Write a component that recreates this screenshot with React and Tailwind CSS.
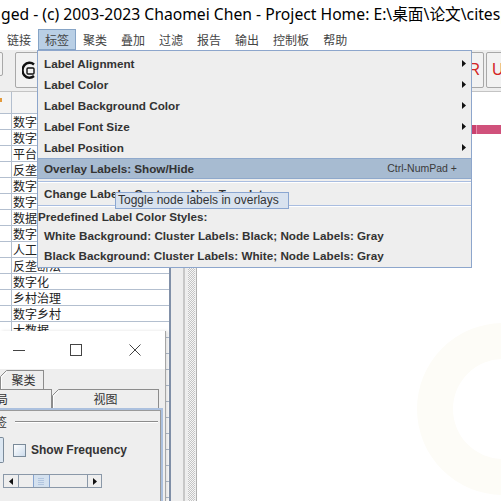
import React from 'react';

const MENUS = ['链接', '标签', '聚类', '叠加', '过滤', '报告', '输出', '控制板', '帮助'];

const SUBMENUS = ['Label Alignment', 'Label Color', 'Label Background Color', 'Label Font Size', 'Label Position'];

const ROWS = [
  '数字经济', '数字治理', '平台经济', '反垄断', '数字技术', '数字金融', '数据要素', '数字贸易',
  '人工智能', '反垄断法', '数字化', '乡村治理', '数字乡村', '大数据', '数字政府', '互联网',
  '区块链', '共同富裕', '高质量发展', '新质生产力', '数字素养', '电子商务', '算法', '隐私保护', '数据安全'
];

function Arrow({ left }) {
  return (
    <svg width="4" height="7" className="shrink-0">
      <path d={left ? 'M4 0 L0 3.5 L4 7Z' : 'M0 0 L4 3.5 L0 7Z'} fill="#111" />
    </svg>
  );
}

function Separator({ h }) {
  return (
    <div className={`${h} flex flex-col justify-center`}>
      <div className="border-t border-[#a9bde0]" />
      <div className="border-t border-white" />
    </div>
  );
}

function Tab({ width, children }) {
  return (
    <div className={`flex h-full ${width}`}>
      <svg width="7" height="19" className="shrink-0">
        <path d="M0.5 19 V6.5 L6.5 0.5 H7" stroke="#8c8c8c" fill="none" />
        <path d="M1.5 19 V7 L7 1.5" stroke="#ffffff" fill="none" />
      </svg>
      <div className="flex-1 border-t border-r border-[#8c8c8c] flex items-center justify-center overflow-hidden">
        {children}
      </div>
    </div>
  );
}

export default function App() {
  return (
    <div className="relative w-[501px] h-[501px] overflow-hidden bg-white font-['Liberation_Sans','Noto_Sans_CJK_SC',sans-serif] text-[#333]">
      {/* window title */}
      <div className="h-[29px] flex items-center whitespace-nowrap text-[15.7px] text-black font-['Noto_Sans','Noto_Sans_CJK_SC',sans-serif] pl-[1px]">
        ged - (c) 2003-2023 Chaomei Chen - Project Home: E:\桌面\论文\citespace
      </div>

      {/* menu bar */}
      <div className="h-[21px] flex bg-white text-[12px] font-['Noto_Sans_CJK_SC',sans-serif] text-[#444]">
        {MENUS.map((m, i) => (
          <div
            key={m}
            className={`flex items-center px-[6px] border ${
              i === 1 ? 'bg-[#b9cfe5] border-[#86a4c6]' : 'border-transparent'
            }`}
          >
            {m}
          </div>
        ))}
      </div>

      {/* toolbar */}
      <div className="h-[42px] flex items-start pt-[2px] bg-[#eeeeee] border-b border-[#c4c4c4] overflow-hidden">
        <div className="-ml-[21px] w-[24px] h-[24px] border border-[#a8a8a8] rounded-[2px] bg-[#f2f2f2]" />
        <div className="ml-[12px] w-[34px] h-[36px] border border-[#a8a8a8] rounded-[2px] bg-[#f2f2f2] flex items-center pl-[6px]">
          <svg width="16" height="18" viewBox="0 0 16 18">
            <path d="M12 3.5 A7 7.5 0 1 0 12 15" stroke="#111" strokeWidth="2.4" fill="none" />
            <rect x="5" y="7" width="7" height="6" rx="1" stroke="#111" strokeWidth="1.4" fill="none" />
          </svg>
        </div>
        <div className="flex-1" />
        <div className="w-[24px] h-[36px] border border-[#a8a8a8] rounded-[2px] bg-[#f2f2f2] flex items-center justify-end pr-[3px] text-[16px] text-[#d42525] mr-[2px]">
          R
        </div>
        <div className="w-[24px] h-[36px] border border-[#a8a8a8] rounded-[2px] bg-[#f2f2f2] flex items-center pl-[5px] text-[16px] text-[#d42525] -mr-[9px] shrink-0">
          U
        </div>
      </div>

      {/* body */}
      <div className="flex h-[409px]">
        {/* table */}
        <div className="w-[171px] border-r-2 border-[#8190a8] bg-white flex flex-col overflow-hidden">
          <div className="h-[22px] flex border-b border-[#b3bfcf] bg-[#f4f4f4] shrink-0">
            <div className="w-[12px] border-r border-[#b3bfcf] pt-[6px]">
              <div className="w-[2px] h-[4px] bg-[#e39a3c]" />
            </div>
            <div className="flex-1" />
          </div>
          {ROWS.map((r) => (
            <div key={r} className="h-[16px] flex border-b border-[#b3bfcf] shrink-0">
              <div className="w-[12px] border-r border-[#b3bfcf]" />
              <div className="flex-1 pl-[1px] text-[12px] leading-[15px] text-[#222] font-['Noto_Sans_CJK_SC',sans-serif] whitespace-nowrap">
                {r}
              </div>
            </div>
          ))}
        </div>
        <div className="w-[12px] bg-[#eeeeee]" />
        {/* splitter */}
        <div className="w-[14px] flex bg-[#eeeeee]">
          <div className="w-[2px] bg-[#c8c8c8]" />
          <div className="w-[3px]" />
          <div className="w-[7px] bg-[conic-gradient(#c4c4c4_25%,#f6f6f6_0_50%,#c4c4c4_0_75%,#f6f6f6_0)] bg-[length:2px_2px]" />
          <div className="w-[1px]" />
          <div className="w-[1px] bg-[#b0b0b0]" />
        </div>
        {/* canvas */}
        <div className="relative flex-1 bg-white">
          <div className="absolute left-[275px] top-[33px] w-[40px] h-[9px] flex">
            <div className="w-[4px] bg-[#c9426f]" />
            <div className="w-[1px] bg-[#e88aab]" />
            <div className="flex-1 bg-[#d0517b]" />
          </div>
          <svg className="absolute left-[218px] top-[229px]" width="100" height="180">
            <path
              d="M88 2 A86 86 0 1 0 88 174 A86 86 0 1 0 88 2 Z M88 38 A50 50 0 1 1 88 138 A50 50 0 1 1 88 38 Z"
              fill="#fdfcf7"
              fillRule="evenodd"
            />
          </svg>
        </div>
      </div>

      {/* dropdown menu */}
      <div className="absolute left-[37px] top-[50px] w-[435px] bg-[#eeeeee] border border-[#8da6cc] pt-[2px] pb-[1px] text-[11.7px] font-bold text-[#333]">
        {SUBMENUS.map((s) => (
          <div key={s} className="h-[21px] flex items-center pl-[6px] pr-[5px]">
            <span>{s}</span>
            <span className="ml-auto">
              <Arrow />
            </span>
          </div>
        ))}
        <div className="h-[21px] flex items-center pl-[6px] pr-[14px] bg-[#a7bbd1] border-y border-[#8fa9cc]">
          <span>Overlay Labels: Show/Hide</span>
          <span className="ml-auto text-[10.5px] font-normal text-[#3a3a3a]">Ctrl-NumPad +</span>
        </div>
        <Separator h="h-[5px]" />
        <div className="h-[20px] flex items-center pl-[6px] whitespace-nowrap">Change Labels: Custom... Nice Template</div>
        <Separator h="h-[3px]" />
        <div className="h-[19px] flex items-center">Predefined Label Color Styles:</div>
        <div className="h-[20px] flex items-center pl-[6px]">White Background: Cluster Labels: Black; Node Labels: Gray</div>
        <div className="h-[20px] flex items-center pl-[6px]">Black Background: Cluster Labels: White; Node Labels: Gray</div>
      </div>

      {/* tooltip */}
      <div className="absolute left-[115px] top-[192px] w-[174px] h-[17px] border border-[#8aa6d1] bg-[#d8e2ef] pl-[2px] text-[12px] leading-[15px] text-[#333] whitespace-nowrap">
        Toggle node labels in overlays
      </div>

      {/* floating dialog */}
      <div className="absolute left-0 top-[331px] w-[166px] h-[170px] border-r border-[#a6a6a6] shadow-[2px_0_3px_rgba(0,0,0,0.12)] flex flex-col">
        <div className="h-[38px] bg-white flex items-center shrink-0">
          <svg width="12" height="12" className="ml-[13px]">
            <path d="M0 6.5 H12" stroke="#444" strokeWidth="1" />
          </svg>
          <svg width="12" height="12" className="ml-[45px]">
            <rect x="0.5" y="0.5" width="11" height="11" stroke="#444" strokeWidth="1" fill="none" />
          </svg>
          <svg width="12" height="12" className="ml-[47px]">
            <path d="M0.5 0.5 L11.5 11.5 M11.5 0.5 L0.5 11.5" stroke="#444" strokeWidth="1" />
          </svg>
        </div>
        <div className="flex-1 bg-[#eeeeee] flex flex-col text-[12px] font-['Noto_Sans_CJK_SC',sans-serif] text-[#333]">
          <div className="h-[20px] pt-[1px] flex">
            <Tab width="w-[44px]">
              <span className="-ml-[3px]">聚类</span>
            </Tab>
          </div>
          <div className="h-[19px] flex">
            <div className="w-[52px] h-full border-t border-r border-[#8c8c8c] flex items-center overflow-hidden">
              <span className="-ml-[16px] whitespace-nowrap">布局</span>
            </div>
            <Tab width="w-[107px]">
              <span className="-ml-[6px]">视图</span>
            </Tab>
          </div>
          <div className="w-[163px] flex-1 border-t-2 border-r-2 border-[#abc0de]">
            <div className="h-full border-t border-r border-[#9a9a9a] flex flex-col">
              <div className="mt-[3px] h-[16px] flex items-center">
                <span className="-ml-[17px] whitespace-nowrap">标签</span>
                <div className="ml-[8px] w-[143px] border-t border-b border-t-[#8c8c8c] border-b-white" />
              </div>
              <div className="mt-[7px] h-[26px] flex items-center">
                <div className="w-[4px] h-[26px] border-y border-r border-[#7a8a99] rounded-r-[2px] bg-[#dce7f2]" />
                <div className="ml-[9px] w-[13px] h-[13px] border border-[#7a8a99] bg-gradient-to-br from-white to-[#cddcec]" />
                <span className="ml-[5px] font-['Liberation_Sans',sans-serif] font-bold text-[12px]">Show Frequency</span>
              </div>
              <div className="mt-[11px] ml-[3px] w-[99px] h-[14px] flex border border-[#8a98a8] bg-[#eeeeee]">
                <div className="w-[15px] flex items-center justify-center border-r border-[#8a98a8]">
                  <Arrow left />
                </div>
                <div className="w-[14px]" />
                <div className="w-[17px] border-x border-[#86a4d0] bg-[#d4e1ef] flex items-center justify-center">
                  <svg width="7" height="7">
                    <path d="M1 0 V7 M3 0 V7 M5 0 V7" stroke="#8fa9cf" strokeWidth="1" strokeDasharray="1 1" />
                  </svg>
                </div>
                <div className="flex-1" />
                <div className="w-[14px] flex items-center justify-center border-l border-[#8a98a8]">
                  <Arrow />
                </div>
              </div>
            </div>
          </div>
        </div>
      </div>
    </div>
  );
}
